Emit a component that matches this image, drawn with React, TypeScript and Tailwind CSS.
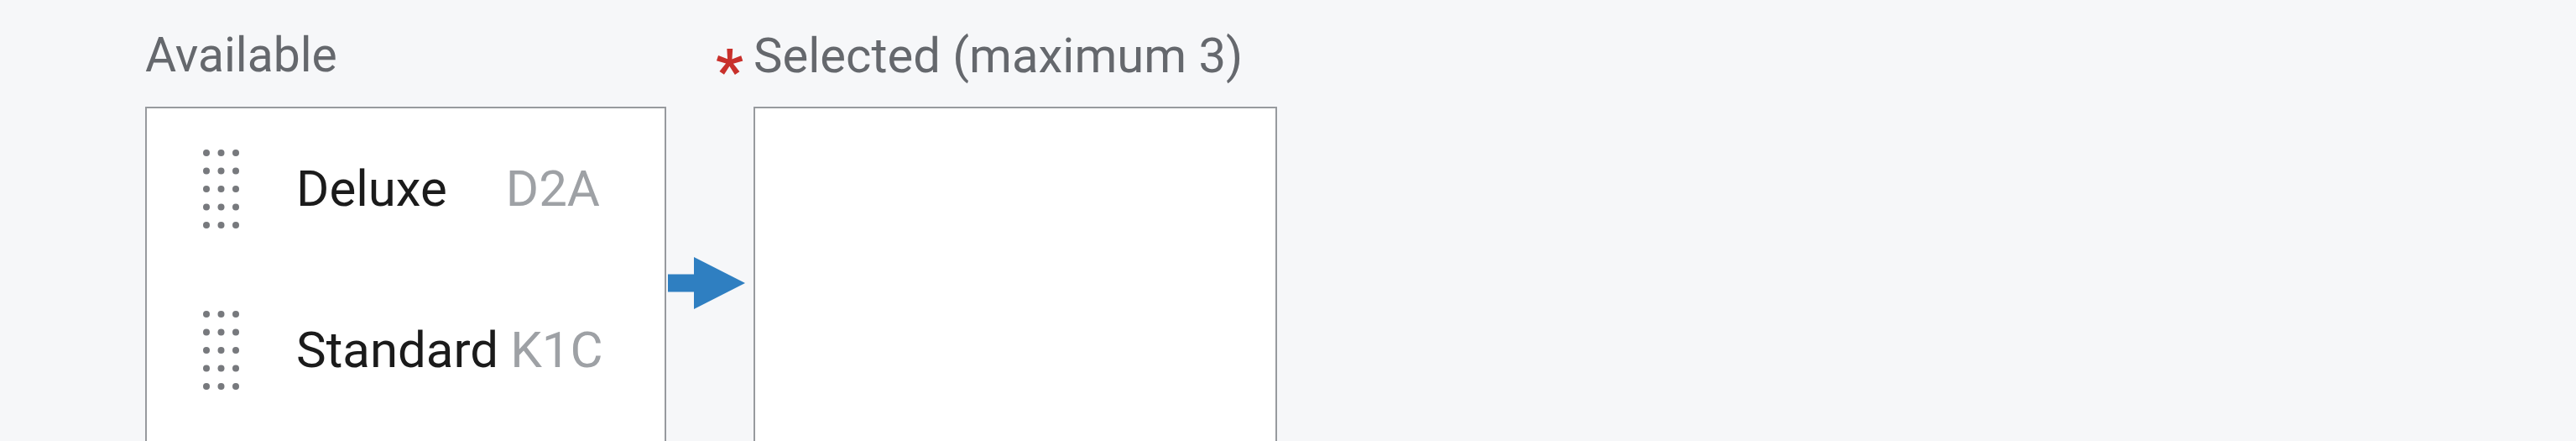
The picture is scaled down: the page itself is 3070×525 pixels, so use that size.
import React from 'react'

type Option = { label: string; code: string }

const available: Option[] = [
  { label: 'Deluxe', code: 'D2A' },
  { label: 'Standard', code: 'K1C' },
]

function Grip() {
  const cols = [4, 21.5, 39]
  const rows = [4, 25.5, 47, 68.5, 90]
  return (
    <svg width="43" height="94" viewBox="0 0 43 94" className="shrink-0">
      {rows.map((cy) =>
        cols.map((cx) => <circle key={`${cx}-${cy}`} cx={cx} cy={cy} r="4" fill="#77797d" />)
      )}
    </svg>
  )
}

function MoveArrow() {
  return (
    <svg width="92" height="62" viewBox="0 0 92 62">
      <path d="M0 20.5H31V0L92 31L31 62V41.5H0Z" fill="#2f7fc1" />
    </svg>
  )
}

function OptionRow({ option }: { option: Option }) {
  return (
    <li className="flex h-[192px] items-center pl-[67px]">
      <Grip />
      <div className="ml-[68px] flex w-[362px] items-center justify-between gap-[14px] text-[60px] leading-none">
        <span className="text-[#1b1b1b]">{option.label}</span>
        <span className="text-[#9ea1a5]">{option.code}</span>
      </div>
    </li>
  )
}

export default function App() {
  return (
    <div className="h-[525px] w-full overflow-hidden bg-[#f6f7f9] font-['Roboto','Liberation_Sans',sans-serif]">
      <div className="flex pl-[173px] pt-[38px]">
        <div className="flex w-[621px] flex-col">
          <div className="h-[56px] text-[57px] leading-[56px] text-[#65686d]">Available</div>
          <ul className="mt-[33px] h-[420px] border-2 border-[#979a9e] bg-white">
            {available.map((o) => (
              <OptionRow key={o.code} option={o} />
            ))}
          </ul>
        </div>

        <div className="mt-[89px] flex h-[420px] w-[104px] items-center pl-[2px]">
          <MoveArrow />
        </div>

        <div className="flex w-[624px] flex-col">
          <div className="flex h-[56px] items-start text-[58px] leading-[56px] text-[#65686d]">
            <span className="-ml-[45px] mr-[15px] mt-[20px] w-[30px] text-center text-[72px] font-bold leading-[56px] text-[#c8302b]">
              *
            </span>
            <span>Selected (maximum 3)</span>
          </div>
          <ul className="mt-[33px] h-[420px] border-2 border-[#979a9e] bg-white" />
        </div>
      </div>
    </div>
  )
}
